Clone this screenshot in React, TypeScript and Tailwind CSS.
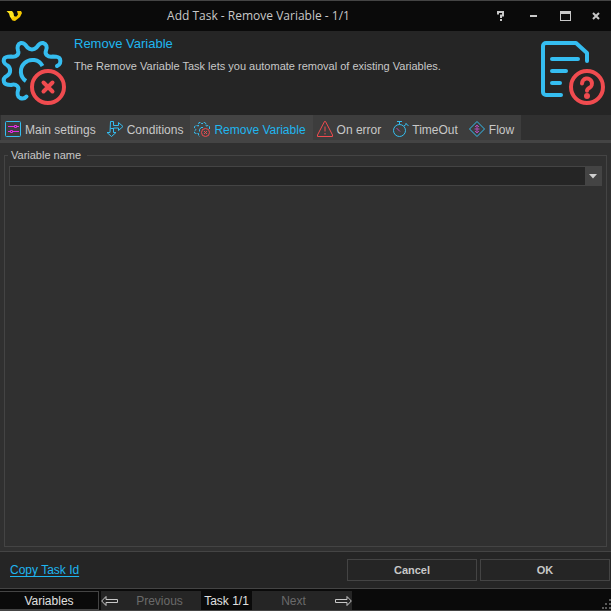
import type { ReactNode } from "react";

const BLUE = "#35bdf0";
const RED = "#f04b4f";
const MAGENTA = "#e22be2";

const BIG_GEAR =
  "M57 35C60 34 61 31 60 28C59 25.500 56 25.500 53 25.500C47.500 26.500 44.500 23 46 19.500C47.500 16 46.500 13 43 12C39.500 11.500 38.500 14 36.500 16.500C34 19 30 19 27.500 16.500C25.500 14 24.500 11.500 21 12C17.500 13 17 16 18 19.500C19.500 23 16.500 26.500 11 25.500C8 25.500 5 25.500 4 28C3 31 4.500 33 7.500 34.500C11 37 11 42 7.500 44.500C4.500 46 3 48 4 51C5 54 8 54 11 54C16.500 52.500 19.500 56 18 59.500C17 62 17.500 66 20 67C23 68 25 67.500 26.500 65.500";

const SMALL_GEAR =
  "M15.500 8V5.500L14 4.500L12 5V3L11 1.500L9.500 1.500L8 3L6.500 1.500H5L4.500 3.500V5L2.500 4.500L0.500 5.500V7L2 8.500L0.500 10V12L2.500 12.500L4.500 12.500V14.500L5.500 15.500";

function RemoveVariableArt() {
  return (
    <svg className="shrink-0" width="68" height="84" viewBox="0 0 68 84" fill="none" strokeWidth="4" strokeLinecap="round" strokeLinejoin="round" aria-hidden="true">
      <path stroke={BLUE} d={BIG_GEAR} />
      <path stroke={BLUE} strokeLinecap="butt" d="M42.500 35A11.500 11.500 0 1 0 26 50" />
      <circle cx="48" cy="56" r="16" stroke={RED} />
      <path stroke={RED} d="M43.500 51.500l9 9M52.500 51.500l-9 9" />
    </svg>
  );
}

function HelpArt() {
  return (
    <svg className="shrink-0" width="71" height="84" viewBox="0 0 71 84" fill="none" strokeWidth="4" strokeLinecap="round" strokeLinejoin="round" aria-hidden="true">
      <path stroke={BLUE} d="M21 64H6a3 3 0 0 1-3-3V15a3 3 0 0 1 3-3H36L47 22V30M12 28H38M12 40H26M12 52H20" />
      <circle cx="47" cy="56" r="16" stroke={RED} />
      <path stroke={RED} d="M42 52.500a5 5 0 1 1 7.500 4.300c-1.800 1-2.500 1.500-2.500 3" />
      <circle cx="47" cy="65" r="3" fill={RED} stroke="none" />
    </svg>
  );
}

function Icon({ children }: { children: ReactNode }) {
  return (
    <svg className="shrink-0" width="17" height="17" viewBox="0 0 17 17" fill="none" strokeWidth="1" aria-hidden="true">
      {children}
    </svg>
  );
}

const settingsIcon = (
  <Icon>
    <rect x="0.5" y="0.5" width="15" height="15" rx="1" stroke={BLUE} />
    <path stroke={MAGENTA} d="M3 5.500H9M12 5.500H14M3 10.500H5M8 10.500H14M9.500 4.500h2v2h-2zM5.500 9.500h2v2h-2z" />
  </Icon>
);
const conditionsIcon = (
  <Icon>
    <path stroke={BLUE} d="M3.500 0.500h3v4h5v-3l4.500 4-4.500 4v-2.500h-5v4.500h2.500l-4.500 4-4.500-4h3zM3.500 7.500h3" />
  </Icon>
);
const removeIcon = (
  <Icon>
    <path stroke={BLUE} strokeDasharray="3 1" d={SMALL_GEAR} />
    <path stroke={BLUE} d="M5.500 10.500V8.500L7 6.500H9" />
    <circle cx="11.500" cy="11.500" r="4" stroke={RED} fill="#444444" />
    <path stroke={RED} d="M10 10l3 3M13 10l-3 3" />
  </Icon>
);
const errorIcon = (
  <Icon>
    <path stroke={RED} strokeLinejoin="round" d="M7.500 0.500H8.500L15.500 14V15.500H0.500V14ZM8 5.500V10.500M8 12V13.500" />
  </Icon>
);
const timeoutIcon = (
  <Icon>
    <circle cx="7.500" cy="9.500" r="6" stroke={BLUE} />
    <path stroke={BLUE} d="M5 0.500H10M7.500 0.500V3.500M12 5l2.500-2M13.500 2l3 3" />
    <path stroke="#b04bb8" d="M4.500 7L8 10.500" />
  </Icon>
);
const flowIcon = (
  <Icon>
    <path stroke={BLUE} d="M8 0.500L15.500 8L8 15.500L0.500 8z" />
    <path stroke="#b04bb8" d="M8 4V12M6 6l2-2 2 2M6 10l2 2 2-2M5.500 8H10.500" />
  </Icon>
);

const TABS = [
  { label: "Main settings", icon: settingsIcon },
  { label: "Conditions", icon: conditionsIcon },
  { label: "Remove Variable", icon: removeIcon, active: true },
  { label: "On error", icon: errorIcon },
  { label: "TimeOut", icon: timeoutIcon },
  { label: "Flow", icon: flowIcon },
];

function TitleBar() {
  return (
    <header className="flex h-[31px] items-center border-t border-[#444444] bg-[#0a0a0a] text-[#c8c8c8]">
      <div className="w-8 pl-[6px]">
        <svg width="17" height="12" viewBox="0 0 17 12" aria-hidden="true">
          <path fill="#ffe51f" d="M0.500 1H6L7.500 3L8 6L9 7L6.500 9.500L4 7L3 3.500Z" />
          <path fill="#f5c800" d="M11 1H15L16 3L14 7L9 11L6.500 10.500L5 8.500L8 6.500L10.500 6.500L12 4.500Z" />
        </svg>
      </div>
      <h1 className="flex-1 text-center font-['Open_Sans',sans-serif] text-[12px]">Add Task - Remove Variable - 1/1</h1>
      <div className="flex">
        <button className="flex h-[30px] w-8 items-center justify-center" aria-label="Help">
          <svg width="8" height="10" viewBox="0 0 8 10" fill="none" stroke="currentColor" strokeWidth="2" aria-hidden="true">
            <path d="M1 3.500V1H6V4.500H4V7M3 9H5" />
          </svg>
        </button>
        <button className="flex h-[30px] w-8 items-center justify-center" aria-label="Minimize">
          <span className="h-[2px] w-[7px] bg-current" />
        </button>
        <button className="flex h-[30px] w-8 items-center justify-center" aria-label="Maximize">
          <span className="h-[10px] w-[11px] border border-t-[3px] border-current" />
        </button>
        <button className="flex h-[30px] w-[30px] items-center justify-center" aria-label="Close">
          <svg width="8" height="8" viewBox="0 0 8 8" stroke="currentColor" strokeWidth="2" aria-hidden="true">
            <path d="M1 1l6 6M7 1l-6 6" />
          </svg>
        </button>
      </div>
    </header>
  );
}

function ArrowIcon({ flip = false }: { flip?: boolean }) {
  return (
    <svg className={flip ? "-scale-x-100" : ""} width="17" height="10" viewBox="0 0 17 10" fill="none" stroke="#c8c8c8" aria-hidden="true">
      <path d="M5 0.500V3.500H16.500V6.500H5V9.500L0.700 5z" />
    </svg>
  );
}

export default function App() {
  return (
    <div className="flex min-h-screen flex-col bg-[#303030] font-['Liberation_Sans',Arial,sans-serif] text-[12px] text-[#c8c8c8]">
      <TitleBar />

      <section className="flex h-[84px] bg-[#252525]">
        <RemoveVariableArt />
        <div className="flex-1 pt-[5px] pl-[6px]">
          <h2 className="text-[13px] leading-4 text-[#1fb6f0]">Remove Variable</h2>
          <p className="pt-[6px] text-[11px] leading-4">The Remove Variable Task lets you automate removal of existing Variables.</p>
        </div>
        <HelpArt />
      </section>

      <nav className="flex h-7 border-b-[3px] border-[#444444] pl-px" role="tablist">
        {TABS.map((tab) => (
          <button
            key={tab.label}
            role="tab"
            aria-selected={!!tab.active}
            className={
              "flex items-center gap-[3px] pt-[3px] pr-[7px] pl-1 whitespace-nowrap " +
              (tab.active ? "bg-[#444444] text-[#1fb6f0]" : "bg-[#3d3d3d]")
            }
          >
            {tab.icon}
            <span className="pt-[2px] leading-4">{tab.label}</span>
          </button>
        ))}
      </nav>

      <main className="flex flex-1 flex-col px-1 pt-1 pb-1">
        <fieldset className="flex-1 border border-[#444444] px-1 pb-1">
          <legend className="ml-[-1px] pr-[6px] pl-[3px] text-[11px] leading-4">
            <label htmlFor="variable-name">Variable name</label>
          </legend>
          <div className="mt-[3px] flex h-5 border border-[#444444] bg-[#252525]">
            <div className="relative flex-1">
              <select id="variable-name" className="h-full w-full appearance-none bg-transparent px-1 outline-none" defaultValue="">
                <option value=""></option>
              </select>
              <span className="pointer-events-none absolute inset-y-0 right-0 flex w-4 items-center justify-center bg-[#444444]">
                <svg width="8" height="5" viewBox="0 0 8 5" aria-hidden="true">
                  <path fill="#d0d0d0" d="M0 0H8L4 4.500z" />
                </svg>
              </span>
            </div>
          </div>
        </fieldset>
      </main>

      <section className="flex h-[38px] items-center border-y border-[#444444] bg-[#252525] pr-px pl-[10px]">
        <a href="#copy" className="text-[#1fb6f0] underline underline-offset-2">Copy Task Id</a>
        <div className="ml-auto flex gap-[3px] text-[11px] font-bold">
          <button className="h-[22px] w-[130px] border border-[#444444]">Cancel</button>
          <button className="h-[22px] w-[130px] border border-[#444444]">OK</button>
        </div>
      </section>

      <footer className="flex h-[22px] border-b border-[#444444] bg-[#0a0a0a] pt-[2px]">
        <button className="w-[99px] border border-l-0 border-[#444444] leading-4 text-[#e0e0e0]">Variables</button>
        <button className="ml-[2px] flex w-[100px] items-center bg-[#252525] text-[#6a6a6a]">
          <ArrowIcon />
          <span className="flex-1 text-center">Previous</span>
        </button>
        <span className="w-[51px] text-center leading-5 text-[#e0e0e0]">Task 1/1</span>
        <button className="flex w-[100px] items-center bg-[#252525] text-[#6a6a6a]">
          <span className="flex-1 text-center">Next</span>
          <ArrowIcon flip />
        </button>
        <svg className="mt-auto ml-auto" width="9" height="12" viewBox="0 0 9 12" fill="#5a5a5a" aria-hidden="true">
          <path d="M7 1h2v2H7zM3 5h2v2H3zM7 5h2v2H7zM0 9h2v2H0zM3 9h2v2H3zM7 9h2v2H7z" />
        </svg>
      </footer>
    </div>
  );
}
